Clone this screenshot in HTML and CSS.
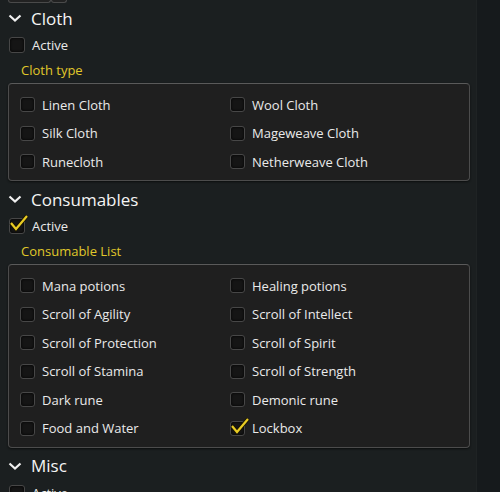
FILE: index.html
```html
<!DOCTYPE html>
<html lang="en">
<head>
  <meta charset="UTF-8">
  <title>Options</title>
  <link rel="stylesheet" href="styles.css">
</head>
<body>
  <div class="frame">
    <div class="panel">
      <div class="tabs"><span class="tab"></span><span class="tab small"></span></div>

      <section class="group">
        <h2 class="group-title"><svg class="chevron" width="14" height="8" viewBox="0 0 14 8"><path d="M1.5 1.5 L7 6.5 L12.5 1.5" fill="none" stroke="#f0f0f0" stroke-width="2.2"/></svg>Cloth</h2>
        <label class="check main"><span class="box"></span>Active</label>
        <div class="sub-title">Cloth type</div>
        <div class="options">
          <label class="check"><span class="box"></span>Linen Cloth</label>
          <label class="check"><span class="box"></span>Wool Cloth</label>
          <label class="check"><span class="box"></span>Silk Cloth</label>
          <label class="check"><span class="box"></span>Mageweave Cloth</label>
          <label class="check"><span class="box"></span>Runecloth</label>
          <label class="check"><span class="box"></span>Netherweave Cloth</label>
        </div>
      </section>

      <section class="group">
        <h2 class="group-title"><svg class="chevron" width="14" height="8" viewBox="0 0 14 8"><path d="M1.5 1.5 L7 6.5 L12.5 1.5" fill="none" stroke="#f0f0f0" stroke-width="2.2"/></svg>Consumables</h2>
        <label class="check main"><span class="box checked"><svg class="tick" width="20" height="20" viewBox="0 0 20 20"><path d="M2 9 L7 15 L18 2" fill="none" stroke="#1a1400" stroke-width="4"/><path d="M2 9 L7 15 L18 2" fill="none" stroke="#e8cc24" stroke-width="2.2"/></svg></span>Active</label>
        <div class="sub-title">Consumable List</div>
        <div class="options">
          <label class="check"><span class="box"></span>Mana potions</label>
          <label class="check"><span class="box"></span>Healing potions</label>
          <label class="check"><span class="box"></span>Scroll of Agility</label>
          <label class="check"><span class="box"></span>Scroll of Intellect</label>
          <label class="check"><span class="box"></span>Scroll of Protection</label>
          <label class="check"><span class="box"></span>Scroll of Spirit</label>
          <label class="check"><span class="box"></span>Scroll of Stamina</label>
          <label class="check"><span class="box"></span>Scroll of Strength</label>
          <label class="check"><span class="box"></span>Dark rune</label>
          <label class="check"><span class="box"></span>Demonic rune</label>
          <label class="check"><span class="box"></span>Food and Water</label>
          <label class="check"><span class="box checked"><svg class="tick" width="20" height="20" viewBox="0 0 20 20"><path d="M2 9 L7 15 L18 2" fill="none" stroke="#1a1400" stroke-width="4"/><path d="M2 9 L7 15 L18 2" fill="none" stroke="#e8cc24" stroke-width="2.2"/></svg></span>Lockbox</label>
        </div>
      </section>

      <section class="group">
        <h2 class="group-title"><svg class="chevron" width="14" height="8" viewBox="0 0 14 8"><path d="M1.5 1.5 L7 6.5 L12.5 1.5" fill="none" stroke="#f0f0f0" stroke-width="2.2"/></svg>Misc</h2>
        <label class="check main"><span class="box"></span>Active</label>
      </section>
    </div>
    <div class="track"></div>
  </div>
</body>
</html>
```

FILE: styles.css
```css
body {
  margin: 0;
  background-color: #1b1f20;
  font-family: "Open Sans", "DejaVu Sans", sans-serif;
  color: #ececec;
  overflow: hidden;
}
.frame {
  display: flex;
  height: 492px;
}
.panel {
  width: 468px;
  padding: 0 0 0 8px;
}
.track {
  flex: 1;
  background-color: #161a1c;
  border-left: 1px solid #1f2324;
}
.tabs {
  display: flex;
  height: 3px;
}
.tab {
  width: 41px;
  border: 1px solid #4a4a4a;
  border-top: none;
  border-radius: 0 0 3px 3px;
  background-color: #222;
}
.tab.small {
  width: 14px;
}
.group {
  margin-top: 4px;
}
.group + .group {
  margin-top: 7px;
}
.group-title {
  display: flex;
  align-items: center;
  height: 22px;
  margin: 0;
  font-size: 17px;
  font-weight: normal;
  color: #f4f4f4;
}
.chevron {
  margin-right: 9px;
}
.check {
  display: flex;
  align-items: center;
  height: 15px;
  font-size: 13px;
  color: #eaeaea;
  white-space: nowrap;
}
.check .box {
  position: relative;
  width: 15px;
  height: 15px;
  margin-right: 7px;
  box-sizing: border-box;
  border: 1px solid #474747;
  border-radius: 3px;
  background-color: #151515;
  box-shadow: inset 0 0 3px #000;
  flex-shrink: 0;
}
.check.main {
  height: 16px;
  margin-top: 8px;
  margin-left: 1px;
}
.check.main .box {
  width: 16px;
  height: 16px;
}
.tick {
  position: absolute;
  left: -1px;
  top: -5px;
}
.sub-title {
  margin-top: 9px;
  padding-left: 13px;
  font-size: 13px;
  line-height: 16px;
  color: #e0c82a;
}
.options {
  display: grid;
  grid-template-columns: 210px 210px;
  grid-auto-rows: 15px;
  row-gap: 13.5px;
  width: 462px;
  box-sizing: border-box;
  margin-top: 5px;
  padding: 13px 11px 11px;
  border: 1px solid #4c4c4c;
  border-top-color: #5a5a5a;
  border-radius: 4px;
  background-color: #1f1f1f;
  box-shadow: 0 1px 2px #0c0e0e;
}
```
